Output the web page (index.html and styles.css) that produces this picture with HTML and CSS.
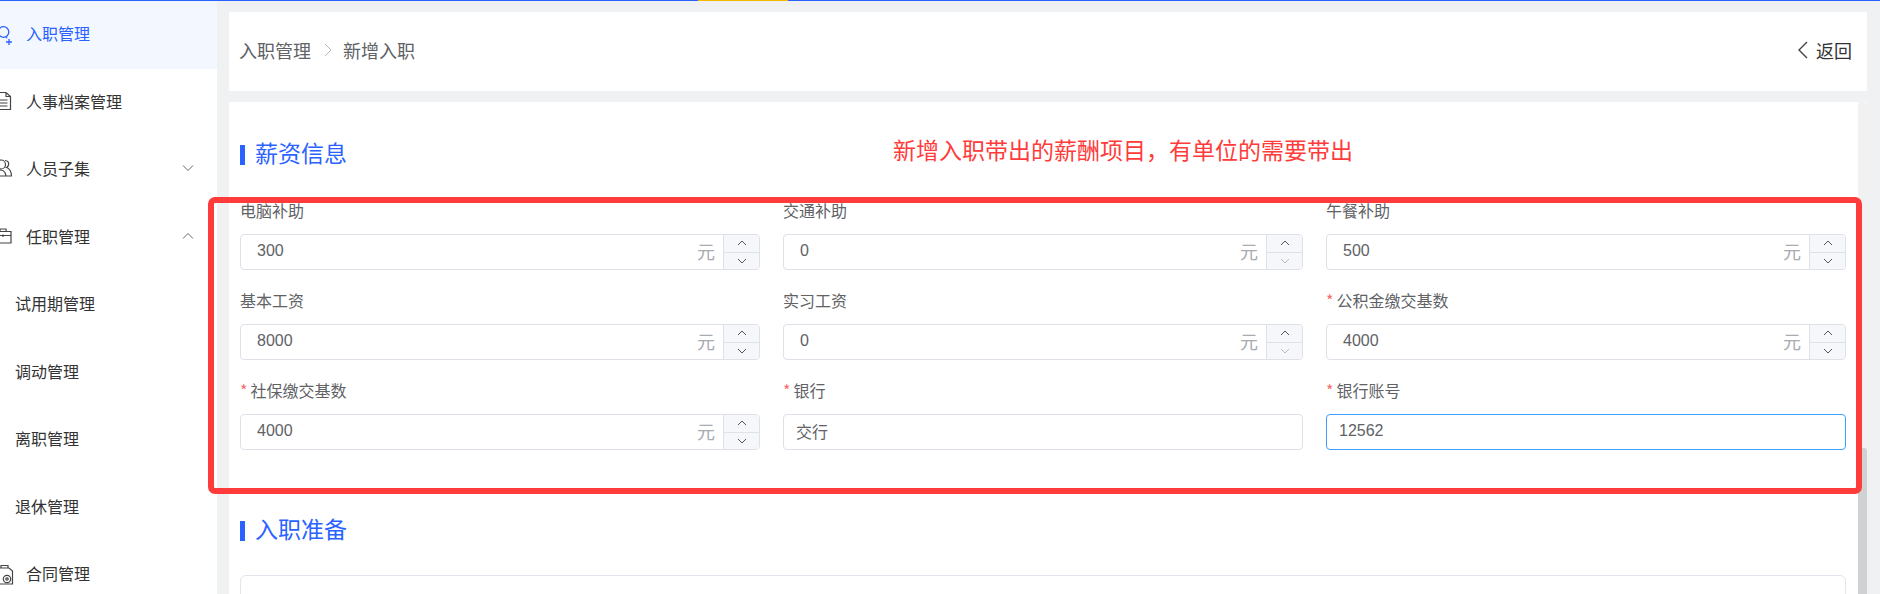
FILE: index.html
```html
<!DOCTYPE html>
<html>
<head>
    <title>新增入职</title>
    <link rel="stylesheet" href="styles.css">
</head>
<body>
    <div class="topline"><span class="topline-mark"></span></div>
    <div class="layout">
        <div class="sidebar">
            <div class="menu-item active">
                <svg class="menu-icon" viewBox="0 0 18 18" fill="none" stroke="#2a62ff" stroke-width="1.300"><circle cx="9.500" cy="8" r="5.300"/><path d="M1 20c0-3 2-5.500 5-6.300M12 13.500c.5.200 1 .4 1.300.6M12 18h6M15 15v6"/></svg>
                <span>入职管理</span>
            </div>
            <div class="menu-item">
                <svg class="menu-icon" viewBox="0 0 18 18" fill="none" stroke="#444" stroke-width="1.200"><path d="M2 .5h10l4.500 4v13H2zM12 .5v4h4.500M5 8h8.500M5 11h8.500M5 14h8.500"/></svg>
                <span>人事档案管理</span>
            </div>
            <div class="menu-item">
                <svg class="menu-icon" viewBox="0 0 18 18" fill="none" stroke="#444" stroke-width="1.200"><circle cx="7" cy="5.500" r="4.500"/><path d="M1 17c0-3 2-6 6-6 2 0 3 1 4 2.500l1 3.500zM11 1.500c3 0 4 2 3.500 4.500-.3 1.200-1 2-2 2.500 2.500.5 5 4 5 8.500H12"/></svg>
                <span>人员子集</span>
                <svg class="menu-arrow" viewBox="0 0 12 8" fill="none" stroke="#666" stroke-width="1"><path d="M1 1.500l5 5 5-5"/></svg>
            </div>
            <div class="menu-item">
                <svg class="menu-icon" viewBox="0 0 18 18" fill="none" stroke="#444" stroke-width="1.200"><path d="M1 4.500h16v11.500H1zM6 4.500V2h6v2.500M1 8.500h16M9 7.500v2.500"/></svg>
                <span>任职管理</span>
                <svg class="menu-arrow" viewBox="0 0 12 8" fill="none" stroke="#666" stroke-width="1"><path d="M1 6.500l5-5 5 5"/></svg>
            </div>
            <div class="menu-item sub">试用期管理</div>
            <div class="menu-item sub">调动管理</div>
            <div class="menu-item sub">离职管理</div>
            <div class="menu-item sub">退休管理</div>
            <div class="menu-item">
                <svg class="menu-icon" viewBox="0 0 18 18" fill="none" stroke="#444" stroke-width="1.200"><path d="M3 4h12l3.500 3v13H3zM7 4V1.500h7V4"/><circle cx="13" cy="15" r="3.700"/><circle cx="13" cy="15" r="1.200"/></svg>
                <span>合同管理</span>
            </div>
        </div>

        <div class="content">
            <div class="crumb-card">
                <div class="crumbs">
                    <span>入职管理</span>
                    <svg class="crumb-sep" viewBox="0 0 8 14" fill="none" stroke="#b4b6bb" stroke-width="1"><path d="M1 1l6 6-6 6"/></svg>
                    <span>新增入职</span>
                </div>
                <div class="back">
                    <svg class="back-icon" viewBox="0 0 11 18" fill="none" stroke="#444" stroke-width="1.400"><path d="M10 1L2 9l8 8"/></svg>
                    <span>返回</span>
                </div>
            </div>

            <div class="form-card">
                <div class="form-body">
                    <h3 class="section-title">薪资信息</h3>
                    <div class="form-grid">
                        <div class="field">
                            <div class="field-label">电脑补助</div>
                            <div class="input num">
                                <span class="value">300</span><span class="unit">元</span>
                                <div class="stepper">
                                    <div class="step"><svg viewBox="0 0 10 6" fill="none" stroke="#555" stroke-width="1"><path d="M1 5l4-4 4 4"/></svg></div>
                                    <div class="step"><svg viewBox="0 0 10 6" fill="none" stroke="#555" stroke-width="1"><path d="M1 1l4 4 4-4"/></svg></div>
                                </div>
                            </div>
                        </div>
                        <div class="field">
                            <div class="field-label">交通补助</div>
                            <div class="input num">
                                <span class="value">0</span><span class="unit">元</span>
                                <div class="stepper">
                                    <div class="step"><svg viewBox="0 0 10 6" fill="none" stroke="#555" stroke-width="1"><path d="M1 5l4-4 4 4"/></svg></div>
                                    <div class="step"><svg viewBox="0 0 10 6" fill="none" stroke="#bbb" stroke-width="1"><path d="M1 1l4 4 4-4"/></svg></div>
                                </div>
                            </div>
                        </div>
                        <div class="field">
                            <div class="field-label">午餐补助</div>
                            <div class="input num">
                                <span class="value">500</span><span class="unit">元</span>
                                <div class="stepper">
                                    <div class="step"><svg viewBox="0 0 10 6" fill="none" stroke="#555" stroke-width="1"><path d="M1 5l4-4 4 4"/></svg></div>
                                    <div class="step"><svg viewBox="0 0 10 6" fill="none" stroke="#555" stroke-width="1"><path d="M1 1l4 4 4-4"/></svg></div>
                                </div>
                            </div>
                        </div>
                        <div class="field">
                            <div class="field-label">基本工资</div>
                            <div class="input num">
                                <span class="value">8000</span><span class="unit">元</span>
                                <div class="stepper">
                                    <div class="step"><svg viewBox="0 0 10 6" fill="none" stroke="#555" stroke-width="1"><path d="M1 5l4-4 4 4"/></svg></div>
                                    <div class="step"><svg viewBox="0 0 10 6" fill="none" stroke="#555" stroke-width="1"><path d="M1 1l4 4 4-4"/></svg></div>
                                </div>
                            </div>
                        </div>
                        <div class="field">
                            <div class="field-label">实习工资</div>
                            <div class="input num">
                                <span class="value">0</span><span class="unit">元</span>
                                <div class="stepper">
                                    <div class="step"><svg viewBox="0 0 10 6" fill="none" stroke="#555" stroke-width="1"><path d="M1 5l4-4 4 4"/></svg></div>
                                    <div class="step"><svg viewBox="0 0 10 6" fill="none" stroke="#bbb" stroke-width="1"><path d="M1 1l4 4 4-4"/></svg></div>
                                </div>
                            </div>
                        </div>
                        <div class="field">
                            <div class="field-label"><span class="star">*</span>公积金缴交基数</div>
                            <div class="input num">
                                <span class="value">4000</span><span class="unit">元</span>
                                <div class="stepper">
                                    <div class="step"><svg viewBox="0 0 10 6" fill="none" stroke="#555" stroke-width="1"><path d="M1 5l4-4 4 4"/></svg></div>
                                    <div class="step"><svg viewBox="0 0 10 6" fill="none" stroke="#555" stroke-width="1"><path d="M1 1l4 4 4-4"/></svg></div>
                                </div>
                            </div>
                        </div>
                        <div class="field">
                            <div class="field-label"><span class="star">*</span>社保缴交基数</div>
                            <div class="input num">
                                <span class="value">4000</span><span class="unit">元</span>
                                <div class="stepper">
                                    <div class="step"><svg viewBox="0 0 10 6" fill="none" stroke="#555" stroke-width="1"><path d="M1 5l4-4 4 4"/></svg></div>
                                    <div class="step"><svg viewBox="0 0 10 6" fill="none" stroke="#555" stroke-width="1"><path d="M1 1l4 4 4-4"/></svg></div>
                                </div>
                            </div>
                        </div>
                        <div class="field">
                            <div class="field-label"><span class="star">*</span>银行</div>
                            <div class="input"><span class="value">交行</span></div>
                        </div>
                        <div class="field">
                            <div class="field-label"><span class="star">*</span>银行账号</div>
                            <div class="input focused"><span class="value">12562</span></div>
                        </div>
                    </div>
                    <h3 class="section-title second">入职准备</h3>
                    <div class="prepare-box"></div>
                </div>
                <div class="scroll-track"><div class="scroll-thumb"></div></div>
            </div>
        </div>
    </div>

    <div class="note-text">新增入职带出的薪酬项目，有单位的需要带出</div>
    <div class="note-frame"></div>
</body>
</html>
```

FILE: styles.css
```css
* {
    box-sizing: border-box;
}
html, body {
    margin: 0;
    height: 594px;
    overflow: hidden;
}
body {
    font-family: "Noto Sans CJK SC", "Liberation Sans", sans-serif;
    font-size: 16px;
    color: #606266;
    background: #f0f1f3;
    position: relative;
}
.topline {
    height: 1px;
    background: #2a62ff;
    padding-left: 698px;
    position: relative;
    z-index: 1;
    box-shadow: 0 1px 8px rgba(0, 0, 0, 0.07);
}
.topline-mark {
    display: block;
    width: 90px;
    height: 1px;
    background: #f5b800;
}
.layout {
    display: flex;
    height: 593px;
    overflow: hidden;
}

/* sidebar */
.sidebar {
    width: 217px;
    flex: none;
    background: #fff;
    overflow: hidden;
}
.menu-item {
    height: 67.5px;
    padding-bottom: 3px;
    display: flex;
    align-items: center;
    color: #333;
    position: relative;
}
.menu-item.active {
    color: #2a62ff;
    background: #f3f7ff;
}
.menu-item.sub {
    padding-left: 15px;
}
.menu-icon {
    width: 18px;
    height: 18px;
    flex: none;
    margin-left: -6px;
    margin-right: 14px;
    overflow: visible;
}
.menu-arrow {
    width: 12px;
    height: 8px;
    margin-left: auto;
    margin-right: 23px;
}

/* main area */
.content {
    flex: 1;
    padding: 11px 13px 0 12px;
    display: flex;
    flex-direction: column;
    gap: 11px;
    min-width: 0;
}
.crumb-card {
    height: 79px;
    flex: none;
    background: #fff;
    display: flex;
    align-items: center;
    justify-content: space-between;
    padding: 0 15px 3px 10px;
    font-size: 18px;
}
.crumbs {
    display: flex;
    align-items: center;
}
.crumb-sep {
    width: 8px;
    height: 14px;
    margin: 0 11px 0 13px;
}
.back {
    display: flex;
    align-items: center;
    color: #333;
}
.back-icon {
    width: 11px;
    height: 18px;
    margin-right: 8px;
}
.form-card {
    flex: 1;
    background: #fff;
    display: flex;
    min-height: 0;
    overflow: hidden;
}
.form-body {
    flex: 1;
    padding: 0 12px 0 11px;
    min-width: 0;
}
.section-title {
    margin: 43px 0 0;
    height: 20px;
    border-left: 5px solid #2a62ff;
    padding-left: 10px;
    font-size: 23px;
    font-weight: 400;
    line-height: 15px;
    color: #2a62ff;
}
.section-title.second {
    margin-top: 71px;
}
.form-grid {
    display: grid;
    grid-template-columns: repeat(3, 1fr);
    column-gap: 23px;
    row-gap: 20px;
    margin-top: 35px;
}
.field-label {
    height: 20px;
    line-height: 20px;
    margin-bottom: 14px;
    white-space: nowrap;
}
.star {
    color: #f56c6c;
    margin-right: 3px;
}
.input {
    height: 36px;
    border: 1px solid #dfe1e9;
    border-radius: 4px;
    background: #fff;
    display: flex;
    align-items: center;
    padding-left: 12px;
    overflow: hidden;
}
.input.num {
    padding-left: 16px;
}
.input.focused {
    border-color: #409eff;
}
.value {
    font-family: "Liberation Sans", "Noto Sans CJK SC", sans-serif;
    flex: 1;
    margin-top: -3px;
}
.unit {
    color: #a8abb2;
    font-size: 18px;
    margin-right: 8px;
    margin-top: -2px;
}
.stepper {
    width: 36px;
    height: 100%;
    flex: none;
    display: flex;
    flex-direction: column;
    background: #f5f7fa;
    border-left: 1px solid #dfe1e9;
}
.step {
    flex: 1;
    display: flex;
    align-items: center;
    justify-content: center;
}
.step + .step {
    border-top: 1px solid #dfe1e9;
}
.step svg {
    width: 10px;
    height: 6px;
}
.prepare-box {
    height: 120px;
    margin-top: 34px;
    border: 1px solid #e3e5ee;
    border-radius: 6px;
}
.scroll-track {
    width: 9px;
    flex: none;
    background: #f1f1f2;
    border-radius: 3px 3px 0 0;
    padding-top: 346px;
    display: flex;
    flex-direction: column;
}
.scroll-thumb {
    flex: 1;
    background: #d0d1d3;
    border-radius: 3px 3px 0 0;
}

/* red annotation drawn over the screenshot */
.note-text {
    position: absolute;
    left: 893px;
    top: 132px;
    font-size: 23px;
    line-height: 34px;
    color: #ff3b3b;
    white-space: nowrap;
}
.note-frame {
    position: absolute;
    left: 208px;
    top: 197px;
    width: 1654px;
    height: 297px;
    border: 6px solid #ff3b3b;
    border-radius: 7px;
}
```
